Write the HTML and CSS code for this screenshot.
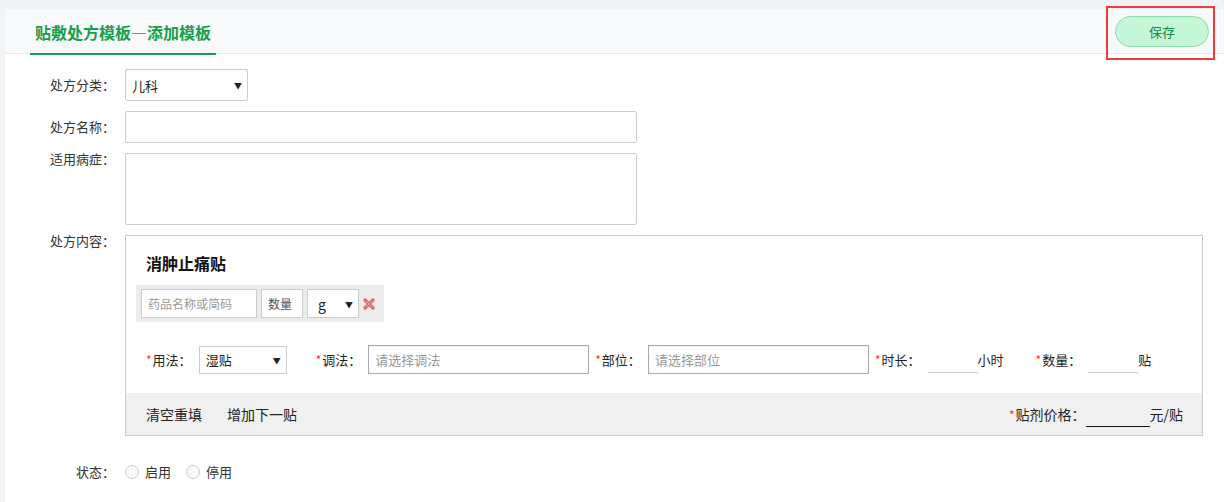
FILE: index.html
```html
<!DOCTYPE html>
<html lang="zh-CN">
<head>
    <meta charset="UTF-8">
    <title>贴敷处方模板—添加模板</title>
    <link rel="stylesheet" href="styles.css">
</head>
<body>

    <div class="panel">
        <!-- En-tête -->
        <div class="panel-head">
            <h2 class="tab">贴敷处方模板—添加模板</h2>
            <button class="btn-save">保存</button>
            <span class="mark"></span>
        </div>

        <!-- Formulaire -->
        <div class="form">
            <div class="row">
                <label class="lbl">处方分类：</label>
                <span class="select sel-cat"><select><option>儿科</option></select></span>
            </div>
            <div class="row">
                <label class="lbl">处方名称：</label>
                <input class="txt txt-name" type="text">
            </div>
            <div class="row">
                <label class="lbl lbl-top">适用病症：</label>
                <textarea class="txt txt-area"></textarea>
            </div>
            <div class="row">
                <label class="lbl lbl-top">处方内容：</label>
                <div class="rx-box">
                    <div class="rx-body">
                        <h3 class="rx-title">消肿止痛贴</h3>
                        <div class="drug-strip">
                            <input class="drug-name" type="text" placeholder="药品名称或简码">
                            <input class="drug-qty" type="text" placeholder="数量">
                            <span class="select sel-unit"><select><option>g</option></select></span>
                            <svg class="del" width="12" height="12" viewBox="0 0 12 12">
                                <path d="M2 2 L10 10 M10 2 L2 10" stroke="#e06464" stroke-width="3.2" stroke-linecap="round"/>
                                <path d="M2.6 2.6 L9.4 9.4 M9.4 2.6 L2.6 9.4" stroke="#f4a0a0" stroke-width="1" stroke-linecap="round"/>
                            </svg>
                        </div>
                        <div class="use-row">
                            <span class="fld"><i>*</i>用法：</span>
                            <span class="select sel-use"><select><option>湿贴</option></select></span>
                            <span class="fld"><i>*</i>调法：</span>
                            <input class="pick" type="text" placeholder="请选择调法">
                            <span class="fld"><i>*</i>部位：</span>
                            <input class="pick" type="text" placeholder="请选择部位">
                            <span class="fld"><i>*</i>时长：</span>
                            <input class="line" type="text">
                            <span class="unit u-hour">小时</span>
                            <span class="fld"><i>*</i>数量：</span>
                            <input class="line" type="text">
                            <span class="unit">贴</span>
                        </div>
                    </div>
                    <div class="rx-foot">
                        <a class="act">清空重填</a>
                        <a class="act">增加下一贴</a>
                        <span class="price"><i>*</i>贴剂价格：<input class="line-dark" type="text">元/贴</span>
                    </div>
                </div>
            </div>
            <div class="row row-state">
                <label class="lbl">状态：</label>
                <label class="radio"><span class="dot"></span>启用</label>
                <label class="radio"><span class="dot"></span>停用</label>
            </div>
        </div>
    </div>

</body>
</html>
```

FILE: styles.css
```css
/* Base */
* { margin: 0; padding: 0; box-sizing: border-box; }
body { background: #f2f3f7; font-family: "Noto Sans CJK SC", "Noto Sans", sans-serif; font-size: 13px; color: #333; }
input, select, textarea, button { font-family: inherit; font-size: 13px; outline: none; }
i { font-style: normal; color: #e33; font-size: 12px; margin-right: 1px; }

/* Panneau */
.panel { margin: 9px 0 0 5px; background: #fff; height: 493px; }
.panel-head { position: relative; height: 45px; background: #f8f9fb; border-bottom: 1px solid #e8eaee; display: flex; align-items: center; justify-content: space-between; padding: 0 15px 0 25px; }
.tab { font-size: 16px; font-weight: bold; color: #16a04a; line-height: 44px; padding: 0 5px; border-bottom: 2px solid #16a04a; margin-bottom: -2px; align-self: flex-end; height: 45px; }
.btn-save { width: 94px; height: 31px; border-radius: 16px; border: 1px solid #8edcae; background: #c3f7d8; color: #1a8a44; cursor: pointer; }
.mark { position: absolute; left: 1101px; top: -3px; width: 109px; height: 54px; border: 2px solid #f23a3a; }

/* Formulaire */
.form { padding-top: 15px; }
.row { display: flex; align-items: flex-start; margin-bottom: 10px; }
.lbl { width: 110px; margin-right: 10px; text-align: right; line-height: 32px; color: #333; }
.lbl-top { line-height: 12px; }
.txt { border: 1px solid #ccc; border-radius: 2px; background: #fff; }
.txt-name { width: 512px; height: 32px; }
.txt-area { width: 512px; height: 72px; resize: none; }

.select { position: relative; display: inline-block; }
.select select { appearance: none; -webkit-appearance: none; width: 100%; height: 100%; border: 1px solid #ccc; background: #fff; color: #222; padding-left: 6px; }
.select::after { content: "▼"; position: absolute; right: 6px; top: 50%; transform: translateY(-50%); font-size: 8px; color: #222; pointer-events: none; }
.sel-cat { width: 123px; height: 32px; }
.sel-cat select { border-radius: 2px; }

/* Contenu de l'ordonnance */
.rx-box { width: 1078px; border: 1px solid #ccc; }
.rx-body { padding: 15px 10px 19px; }
.rx-title { font-size: 16px; font-weight: bold; color: #111; line-height: 24px; margin: 0 0 10px 10px; }
.drug-strip { display: inline-flex; align-items: center; gap: 4px; background: #ececec; padding: 4px 9px 4px 5px; }
.drug-name, .drug-qty { height: 29px; border: 1px solid #ccc; background: #fff; padding: 0 6px; font-size: 12px; }
.drug-name { width: 116px; }
.drug-qty { width: 42px; }
.drug-qty::placeholder { color: #555; }
.drug-name::placeholder { color: #999; }
.sel-unit { width: 52px; height: 29px; }
.sel-unit select { padding-left: 10px; font-size: 14px; }

.use-row { display: flex; align-items: center; margin-top: 23px; padding-left: 10px; height: 29px; }
.fld { white-space: nowrap; margin-right: 7px; color: #222; }
.sel-use { width: 88px; height: 28px; margin-right: 29px; }
.pick { width: 221px; height: 29px; border: 1px solid #aaa; padding: 0 6px; box-shadow: inset 0 1px 2px #eee; margin-right: 6px; }
.pick::placeholder { color: #999; }
.line { width: 50px; height: 22px; border: 0; border-bottom: 1px solid #ccc; margin-top: 4px; }
.unit { color: #222; }
.u-hour { margin-right: 32px; }

.rx-foot { height: 42px; background: #f0f0f0; display: flex; align-items: center; padding: 0 19px 0 20px; font-size: 14px; color: #222; }
.act { margin-right: 25px; cursor: pointer; }
.price { margin-left: auto; display: flex; align-items: center; }
.line-dark { width: 64px; height: 22px; border: 0; border-bottom: 1px solid #111; background: transparent; margin-top: 4px; }

/* Statut */
.row-state { margin-top: 26px; align-items: center; }
.row-state .lbl { line-height: 20px; }
.radio { display: flex; align-items: center; margin-right: 15px; line-height: 20px; }
.dot { width: 14px; height: 14px; border: 1px solid #ccc; border-radius: 50%; background: #f8f8f8; margin-right: 6px; }
```
